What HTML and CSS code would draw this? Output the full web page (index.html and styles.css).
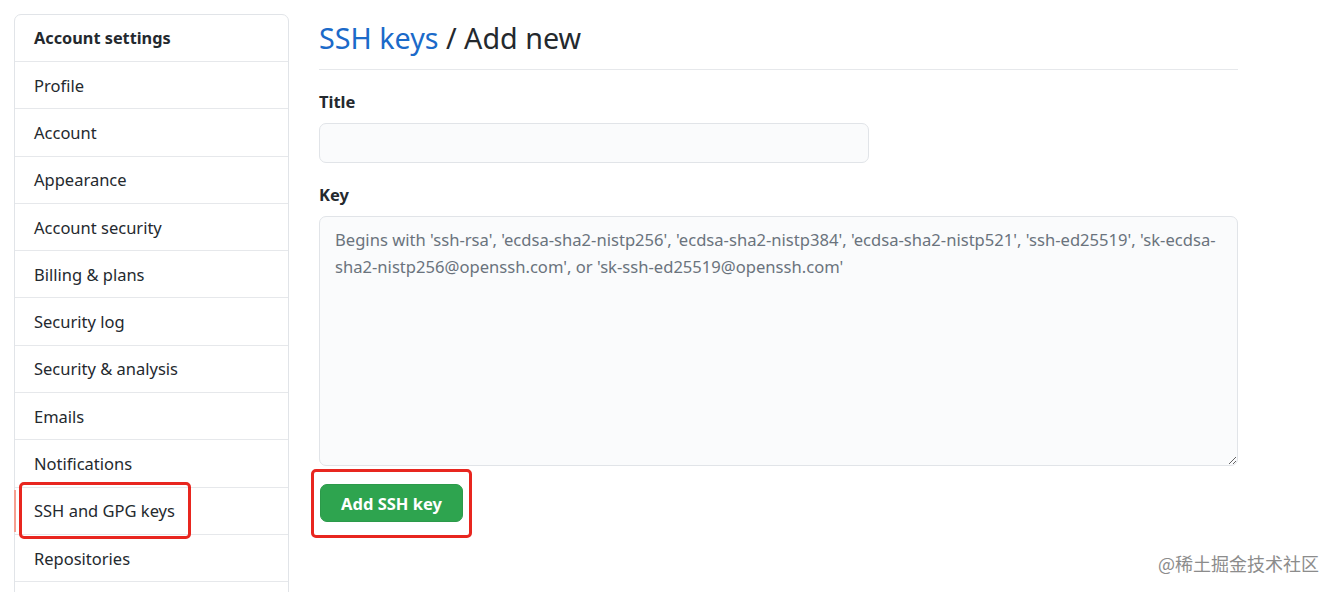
FILE: index.html
```html
<!DOCTYPE html>
<html>
<head>
<meta charset="utf-8">
<link rel="stylesheet" href="styles.css">
</head>
<body>
<div class="page">
  <nav class="sidebar">
    <div class="side-head">Account settings</div>
    <a class="side-item">Profile</a>
    <a class="side-item">Account</a>
    <a class="side-item">Appearance</a>
    <a class="side-item">Account security</a>
    <a class="side-item">Billing &amp; plans</a>
    <a class="side-item">Security log</a>
    <a class="side-item">Security &amp; analysis</a>
    <a class="side-item">Emails</a>
    <a class="side-item">Notifications</a>
    <a class="side-item active">SSH and GPG keys<span class="mark mark-nav"></span></a>
    <a class="side-item">Repositories</a>
  </nav>
  <main class="main">
    <h1 class="title"><a class="crumb">SSH keys</a> / Add new</h1>
    <div class="field">
      <label class="label">Title</label>
      <input class="input" type="text">
    </div>
    <div class="field">
      <label class="label">Key</label>
      <textarea class="textarea" placeholder="Begins with 'ssh-rsa', 'ecdsa-sha2-nistp256', 'ecdsa-sha2-nistp384', 'ecdsa-sha2-nistp521', 'ssh-ed25519', 'sk-ecdsa-sha2-nistp256@openssh.com', or 'sk-ssh-ed25519@openssh.com'"></textarea>
    </div>
    <div class="actions">
      <button class="btn">Add SSH key</button>
      <span class="mark mark-btn"></span>
    </div>
  </main>
</div>
<div class="watermark">@稀土掘金技术社区</div>
</body>
</html>
```

FILE: styles.css
```css
html, body {
  margin: 0;
  padding: 0;
  background: #fff;
  overflow: hidden;
  height: 592px;
}
body {
  font-family: "Noto Sans", "Open Sans", sans-serif;
  color: #24292e;
}
.page {
  display: flex;
  align-items: flex-start;
  gap: 30px;
  padding: 14px 0 0 14px;
}
.sidebar {
  width: 273px;
  flex: none;
  border: 1px solid #e1e4e8;
  border-radius: 7px;
  display: flex;
  flex-direction: column;
  padding-bottom: 40px;
}
.side-head {
  height: 47px;
  box-sizing: border-box;
  padding: 0 19px;
  display: flex;
  align-items: center;
  font-weight: 700;
  font-size: 16.3px;
  border-bottom: 1px solid #e6e8eb;
}
.side-item {
  position: relative;
  height: 47.3px;
  box-sizing: border-box;
  padding: 0 19px;
  display: flex;
  align-items: center;
  font-size: 16.5px;
  color: #24292e;
  border-bottom: 1px solid #e6e8eb;
}
.side-item.active::before {
  content: "";
  position: absolute;
  left: -1px;
  top: 2px;
  bottom: 2px;
  width: 2px;
  background: #f5a091;
}
.mark {
  position: absolute;
  border: 3px solid #e8261f;
  border-radius: 5px;
  pointer-events: none;
}
.mark-nav {
  left: 4px;
  top: -6px;
  width: 166px;
  height: 51px;
}
.main {
  width: 919px;
  flex: none;
}
.title {
  margin: 0;
  font-weight: 400;
  font-size: 28.7px;
  line-height: 40px;
  padding: 4px 0 11px;
  border-bottom: 1px solid #e6e8eb;
  color: #24292e;
}
.crumb {
  color: #1b6ac9;
}
.field {
  display: flex;
  flex-direction: column;
  margin-top: 21px;
}
.field + .field {
  margin-top: 21px;
}
.label {
  font-weight: 700;
  font-size: 16.5px;
  line-height: 22px;
  margin-bottom: 10px;
}
.input {
  width: 550px;
  height: 40px;
  box-sizing: border-box;
  border: 1px solid #e1e4e8;
  border-radius: 7px;
  background: #fafbfc;
  font: inherit;
}
.textarea {
  width: 919px;
  height: 250px;
  box-sizing: border-box;
  border: 1px solid #e1e4e8;
  border-radius: 7px;
  background: #fafbfc;
  padding: 9px 15px;
  font-family: inherit;
  font-size: 16.6px;
  line-height: 27px;
  resize: vertical;
}
.textarea::placeholder {
  color: #6a737d;
}
.actions {
  position: relative;
  margin-top: 18px;
  display: flex;
}
.btn {
  margin-left: 1px;
  width: 143px;
  height: 38px;
  border: 1px solid #2c9a4a;
  border-radius: 7px;
  background: #2ea44f;
  color: #fff;
  font-family: inherit;
  font-weight: 700;
  font-size: 16.5px;
}
.mark-btn {
  left: -8px;
  top: -15px;
  width: 155px;
  height: 63px;
}
.watermark {
  position: absolute;
  left: 1158px;
  top: 550px;
  font-family: "Noto Sans CJK SC", sans-serif;
  font-size: 18px;
  color: #8c8c8c;
}
```
